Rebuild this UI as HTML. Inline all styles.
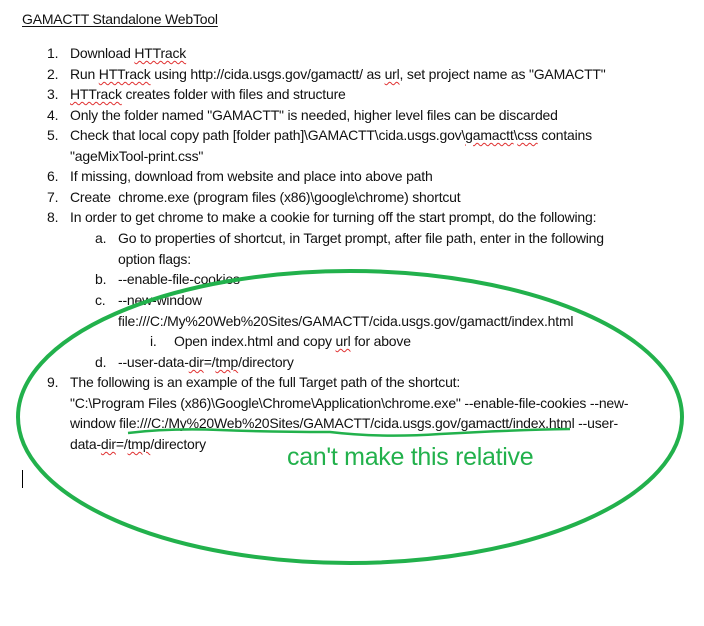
<!DOCTYPE html>
<html><head><meta charset="utf-8"><style>
body{margin:0;width:704px;height:626px;background:#fff;position:relative;overflow:hidden;font-family:"Liberation Sans",sans-serif;font-size:14px;color:#111;letter-spacing:-0.2px}
.l{position:absolute;white-space:nowrap;line-height:16px}
.sq{text-decoration:underline wavy #e03030;text-decoration-thickness:1px;text-underline-offset:2px}
</style></head><body>
<div class="l" style="left:22px;top:11px;text-decoration:underline;text-underline-offset:2px">GAMACTT Standalone WebTool</div>
<div class="l" style="left:47px;top:45px">1.</div><div class="l" style="left:70px;top:45px">Download <span class="sq">HTTrack</span></div>
<div class="l" style="left:47px;top:66px">2.</div><div class="l" style="left:70px;top:66px">Run <span class="sq">HTTrack</span> using http://cida.usgs.gov/gamactt/ as <span class="sq">url</span>, set project name as "GAMACTT"</div>
<div class="l" style="left:47px;top:86px">3.</div><div class="l" style="left:70px;top:86px"><span class="sq">HTTrack</span> creates folder with files and structure</div>
<div class="l" style="left:47px;top:107px">4.</div><div class="l" style="left:70px;top:107px">Only the folder named "GAMACTT" is needed, higher level files can be discarded</div>
<div class="l" style="left:47px;top:127px">5.</div><div class="l" style="left:70px;top:127px">Check that local copy path [folder path]\GAMACTT\cida.usgs.gov\<span class="sq">gamactt</span>\<span class="sq">css</span> contains</div>
<div class="l" style="left:70px;top:148px">"ageMixTool-print.css"</div>
<div class="l" style="left:47px;top:168px">6.</div><div class="l" style="left:70px;top:168px">If missing, download from website and place into above path</div>
<div class="l" style="left:47px;top:189px">7.</div><div class="l" style="left:70px;top:189px">Create&nbsp; chrome.exe (program files (x86)\google\chrome) shortcut</div>
<div class="l" style="left:47px;top:209px">8.</div><div class="l" style="left:70px;top:209px">In order to get chrome to make a cookie for turning off the start prompt, do the following:</div>
<div class="l" style="left:95px;top:230px">a.</div><div class="l" style="left:118px;top:230px">Go to properties of shortcut, in Target prompt, after file path, enter in the following</div>
<div class="l" style="left:118px;top:251px">option flags:</div>
<div class="l" style="left:95px;top:271px">b.</div><div class="l" style="left:118px;top:271px">--enable-file-cookies</div>
<div class="l" style="left:95px;top:292px">c.</div><div class="l" style="left:118px;top:292px">--new-window</div>
<div class="l" style="left:118px;top:313px">file:///C:/My%20Web%20Sites/GAMACTT/cida.usgs.gov/gamactt/index.html</div>
<div class="l" style="left:150px;top:333px">i.</div><div class="l" style="left:174px;top:333px">Open index.html and copy <span class="sq">url</span> for above</div>
<div class="l" style="left:95px;top:354px">d.</div><div class="l" style="left:118px;top:354px">--user-data-<span class="sq">dir</span>=/<span class="sq">tmp</span>/directory</div>
<div class="l" style="left:47px;top:374px">9.</div><div class="l" style="left:70px;top:374px">The following is an example of the full Target path of the shortcut:</div>
<div class="l" style="left:70px;top:395px">"C:\Program Files (x86)\Google\Chrome\Application\chrome.exe" --enable-file-cookies --new-</div>
<div class="l" style="left:70px;top:415px">window file:///C:/My%20Web%20Sites/GAMACTT/cida.usgs.gov/gamactt/index.html --user-</div>
<div class="l" style="left:70px;top:436px">data-<span class="sq">dir</span>=/<span class="sq">tmp</span>/directory</div>
<div style="position:absolute;left:22px;top:470px;width:1px;height:18px;background:#000"></div>
<div class="l" style="left:287px;top:443px;font-size:25px;line-height:28px;color:#22b14c;letter-spacing:-0.3px">can't make this relative</div>
<svg style="position:absolute;left:0;top:0" width="704" height="626">
<ellipse cx="350" cy="417" rx="332" ry="146" fill="none" stroke="#22b14c" stroke-width="4"/>
<path d="M128 433 Q170 428 220 430 T330 432 Q380 438 440 434 Q510 430 570 429" fill="none" stroke="#22b14c" stroke-width="2.5"/>
</svg>
</body></html>
